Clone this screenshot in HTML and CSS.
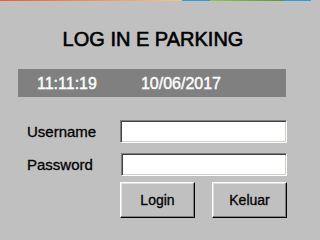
FILE: index.html
```html
<!DOCTYPE html>
<html>
<head>
<meta charset="utf-8">
<link rel="stylesheet" href="styles.css">
</head>
<body>
<div class="strip"></div>
<h1 class="title">LOG IN E PARKING</h1>
<div class="clockbar">
  <span class="time">11:11:19</span>
  <span class="date">10/06/2017</span>
</div>
<form class="form">
  <label class="label" for="u">Username</label>
  <input class="field" id="u" type="text">
  <label class="label" for="p">Password</label>
  <input class="field field-pw" id="p" type="password">
  <div class="buttons">
    <button type="button" class="btn">Login</button>
    <button type="button" class="btn">Keluar</button>
  </div>
</form>
</body>
</html>
```

FILE: styles.css
```css
html, body {
  margin: 0;
  padding: 0;
}
body {
  width: 311px;
  height: 239px;
  background: #c0c0c0;
  font-family: "Liberation Sans", Arial, sans-serif;
  color: #000;
  overflow: hidden;
}
.strip {
  height: 1px;
  background: linear-gradient(to right, #f05a28 0px, #fdc57a 182px, #2a9ee0 182px, #2a9ee0 210px, #8cc63f 210px, #5a9a30 283px, #2a9ee0 283px, #2a9ee0 311px);
}
.title {
  margin: 27px 0 0 0;
  padding-right: 5px;
  font-size: 20px;
  font-weight: normal;
  line-height: 22px;
  text-align: center;
  -webkit-text-stroke: 0.6px #000;
}
.clockbar {
  margin: 19px 0 0 18px;
  width: 268px;
  height: 28px;
  box-sizing: border-box;
  padding: 6px 0 0 19px;
  background: #808080;
  color: #fff;
  font-size: 16px;
  line-height: 18px;
  display: flex;
  gap: 44px;
  -webkit-text-stroke: 0.4px #fff;
}
.form {
  margin: 23px 0 0 27px;
  display: grid;
  grid-template-columns: 93px 167px;
  row-gap: 10px;
  align-items: center;
}
.label {
  font-size: 15px;
  line-height: 17px;
  margin-top: -1px;
  -webkit-text-stroke: 0.3px #000;
}
.field {
  margin: 0;
  width: 167px;
  height: 23px;
  box-sizing: border-box;
  border: 1px solid;
  border-color: #808080 #ffffff #ffffff #808080;
  box-shadow: inset 1px 1px 0 #404040, inset -1px -1px 0 #d4d0c8;
  background: #fff;
  padding: 0 3px;
  outline: none;
}
.field-pw {
  width: 166px;
  margin-left: 1px;
}
.buttons {
  grid-column: 2;
  display: flex;
  gap: 17px;
  margin-top: -4px;
}
.btn {
  width: 75px;
  height: 36px;
  box-sizing: border-box;
  margin: 0;
  padding: 0;
  border: 1px solid;
  border-color: #ffffff #000000 #000000 #ffffff;
  box-shadow: inset -1px -1px 0 #808080, inset 1px 1px 0 #dfdfdf;
  background: #c0c0c0;
  font-family: "Liberation Sans", Arial, sans-serif;
  font-size: 14px;
  color: #000;
  -webkit-text-stroke: 0.3px #000;
}
```
